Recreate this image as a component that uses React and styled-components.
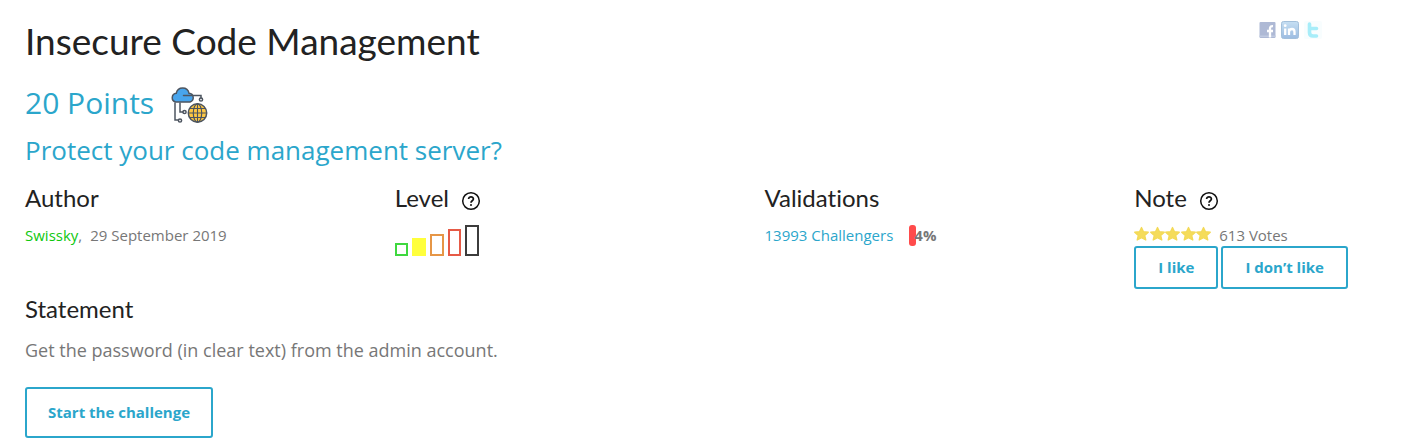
import React from "react";
import styled, { createGlobalStyle } from "styled-components";

const GlobalStyle = createGlobalStyle`
  * { box-sizing: border-box; }
  body {
    margin: 0;
    background: #fff;
    color: #777;
    font: 15px/20px "Open Sans", "Noto Sans", sans-serif;
    font-variant-ligatures: none;
  }
  a { color: #2ba6cb; text-decoration: none; }
  svg { display: block; flex: none; }
`;

const Page = styled.main`
  padding: 16px 26px 8px 25px;
`;

const TopBar = styled.header`
  display: flex;
  justify-content: space-between;
  align-items: flex-start;
`;

const Title = styled.h1`
  margin: 0;
  font-family: Lato, "Open Sans", sans-serif;
  font-size: 37px;
  font-weight: 400;
  line-height: 50px;
  color: #222;
`;

const ShareLinks = styled.nav`
  display: flex;
  align-items: center;
  gap: 5px;
  padding: 5px 80px 0 0;
  opacity: 0.5;
`;

const Points = styled.h2`
  display: flex;
  align-items: center;
  gap: 16px;
  margin: 15px 0 0;
  font-size: 30px;
  font-weight: 400;
  line-height: 40px;
  color: #2ba6cb;
`;

const Category = styled.span`
  padding-top: 5px;
`;

const Tagline = styled.h2`
  margin: 8px 0 0;
  font-size: 26px;
  font-weight: 400;
  line-height: 36px;
  color: #2ba6cb;
`;

const Facts = styled.section`
  display: grid;
  grid-template-columns: 58fr 58fr 58fr 42fr;
  margin-top: 12px;
`;

const Heading = styled.h3`
  display: flex;
  align-items: center;
  gap: 12px;
  margin: 0;
  font-family: Lato, "Open Sans", sans-serif;
  font-size: 24px;
  font-weight: 400;
  line-height: 36px;
  color: #222;
`;

const HelpLink = styled.a`
  padding-top: 6px;
  color: #222;
`;

const Line = styled.div`
  display: flex;
  align-items: center;
  gap: ${(p) => p.$gap || 8}px;
  height: 20px;
  margin-top: 9px;
  white-space: nowrap;
`;

const AuthorLink = styled.a`
  color: #0fc80f;
`;

const Levels = styled.div`
  display: flex;
  align-items: flex-end;
  gap: 4px;
  height: 31px;
  margin-top: 9px;
`;

const LevelBar = styled.span`
  width: ${(p) => p.$width}px;
  height: ${(p) => p.$height}px;
  border: 2px solid ${(p) => p.$color};
  background: ${(p) => (p.$filled ? p.$color : "transparent")};
`;

const Rate = styled.div`
  display: flex;
  align-items: center;
  font-weight: 700;
`;

const RateFill = styled.span`
  width: 7px;
  height: 21px;
  margin-right: -2px;
  border-radius: 3px;
  background: #ff4b4b;
`;

const Buttons = styled.div`
  display: flex;
  gap: 3px;
  margin-top: 1px;
`;

const Button = styled.button`
  padding: ${(p) => (p.$large ? "13px 21px" : "9px 22px")};
  border: 2px solid #2ba6cb;
  border-radius: 3px;
  background: #fff;
  color: #2ba6cb;
  font: 700 15px/21px "Open Sans", sans-serif;
  white-space: nowrap;
  cursor: pointer;
`;

const Statement = styled.section`
  margin-top: 2px;
`;

const Text = styled.p`
  margin: 9px 0 23px;
  font-size: 18px;
  line-height: 28px;
`;

const levels = [
  { width: 13, height: 13, color: "#3fd83f" },
  { width: 14, height: 18, color: "#ffff3c", filled: true },
  { width: 14, height: 22, color: "#e69646" },
  { width: 13, height: 27, color: "#e65a46" },
  { width: 14, height: 31, color: "#3c3c3c" },
];

const CloudIcon = () => (
  <svg width="38" height="38" viewBox="0 0 38 38" fill="none" stroke="#4d5560" strokeWidth="1.5" strokeLinecap="round">
    <path d="M5 17V34H8M10 17V26H13M22 9.500H31V12" />
    <circle cx="31" cy="13.500" r="1.600" />
    <circle cx="14.500" cy="26" r="1.600" />
    <circle cx="10" cy="34.500" r="1.600" />
    <path d="M5.500 16A4.500 4.500 0 0 1 6.300 7.200A6.500 6.500 0 0 1 19 7.200A4.500 4.500 0 0 1 20 16Z" fill="#48a5ed" />
    <path d="M13.500 9.500H22" />
    <circle cx="27.500" cy="27" r="9.200" fill="#ffc843" />
    <ellipse cx="27.500" cy="27" rx="4.200" ry="9.200" strokeWidth="1.200" />
    <path d="M27.500 18V36M18.500 27H36.500M20 22.500H35M20 31.500H35" strokeWidth="1.100" />
  </svg>
);

const HelpIcon = () => (
  <svg width="20" height="20" viewBox="0 0 20 20" fill="none" stroke="#111" aria-hidden="true">
    <circle cx="10" cy="10" r="8.300" strokeWidth="1.500" />
    <path d="M7.600 8.100C7.600 5 12.400 5.100 12.400 8C12.400 9.800 10 9.800 10 11.700" strokeWidth="1.700" />
    <circle cx="10" cy="14" r="1" fill="#111" stroke="none" />
  </svg>
);

const Star = () => (
  <svg width="15" height="18" viewBox="0 0 15 18" aria-hidden="true">
    <path
      d="M7.500 1.500L9.500 5.700L14.300 6.200L10.700 9.400L11.800 14L7.500 11.700L3.200 14L4.300 9.400L0.700 6.200L5.500 5.700Z"
      fill="#f5dc5a"
      stroke="#f3d957"
      strokeWidth="1.300"
      strokeLinejoin="round"
    />
  </svg>
);

const Stars = styled.div`
  display: flex;
  width: 77px;
  justify-content: space-between;
`;

export default function App() {
  return (
    <Page>
      <GlobalStyle />
      <TopBar>
        <Title>Insecure Code Management</Title>
        <ShareLinks aria-label="Share">
          <a href="#facebook" aria-label="Facebook">
            <svg width="17" height="18" viewBox="0 0 17 18">
              <rect x="0.500" y="1" width="16" height="16" rx="1" fill="#6076ad" />
              <path d="M0.500 14.500H16.500V16H0.500Z" fill="#8297c4" />
              <path d="M11 16.500V7.500Q11 5 14 5.200M8 10H14" fill="none" stroke="#fff" strokeWidth="2.300" />
            </svg>
          </a>
          <a href="#linkedin" aria-label="LinkedIn">
            <svg width="18" height="18" viewBox="0 0 18 18">
              <defs>
                <linearGradient id="in" x1="0" y1="0" x2="0" y2="1">
                  <stop offset="0" stopColor="#8fc0e8" />
                  <stop offset="1" stopColor="#3d7bc4" />
                </linearGradient>
              </defs>
              <rect x="0.500" y="0.500" width="17" height="17" rx="2" fill="url(#in)" stroke="#4a82b8" />
              <path d="M4.200 7.500V14M8 14V7.500M8 10.500Q8.500 8 11 8Q13.500 8 13.500 11V14" fill="none" stroke="#fff" strokeWidth="2.300" />
              <circle cx="4.200" cy="4.700" r="1.400" fill="#fff" />
            </svg>
          </a>
          <a href="#twitter" aria-label="Twitter">
            <svg width="18" height="18" viewBox="0 0 18 18">
              <rect width="18" height="18" rx="2" fill="#f3fcfe" />
              <path d="M5.500 3V11.500Q5.500 15 9 15H12.500M5.500 7.500H12.500" fill="none" stroke="#52dcf5" strokeWidth="3.600" strokeLinecap="round" />
            </svg>
          </a>
        </ShareLinks>
      </TopBar>
      <Points>
        20 Points
        <Category>
          <CloudIcon />
        </Category>
      </Points>
      <Tagline>Protect your code management server?</Tagline>
      <Facts>
        <div>
          <Heading>Author</Heading>
          <Line>
            <span>
              <AuthorLink href="#author">Swissky</AuthorLink>,
            </span>
            <time dateTime="2019-09-29">29 September 2019</time>
          </Line>
        </div>
        <div>
          <Heading>
            Level
            <HelpLink href="#levels" aria-label="About levels">
              <HelpIcon />
            </HelpLink>
          </Heading>
          <Levels role="img" aria-label="Level 2 of 5">
            {levels.map((l) => (
              <LevelBar key={l.color} $width={l.width} $height={l.height} $color={l.color} $filled={l.filled} />
            ))}
          </Levels>
        </div>
        <div>
          <Heading>Validations</Heading>
          <Line $gap={16}>
            <a href="#challengers">13993 Challengers</a>
            <Rate>
              <RateFill />
              4%
            </Rate>
          </Line>
        </div>
        <div>
          <Heading>
            Note
            <HelpLink href="#notes" aria-label="About notes">
              <HelpIcon />
            </HelpLink>
          </Heading>
          <Line>
            <Stars role="img" aria-label="5 stars">
              {[1, 2, 3, 4, 5].map((n) => (
                <Star key={n} />
              ))}
            </Stars>
            613 Votes
          </Line>
          <Buttons>
            <Button type="button">I like</Button>
            <Button type="button">I don’t like</Button>
          </Buttons>
        </div>
      </Facts>
      <Statement>
        <Heading>Statement</Heading>
        <Text>Get the password (in clear text) from the admin account.</Text>
        <Button type="button" $large>
          Start the challenge
        </Button>
      </Statement>
    </Page>
  );
}
